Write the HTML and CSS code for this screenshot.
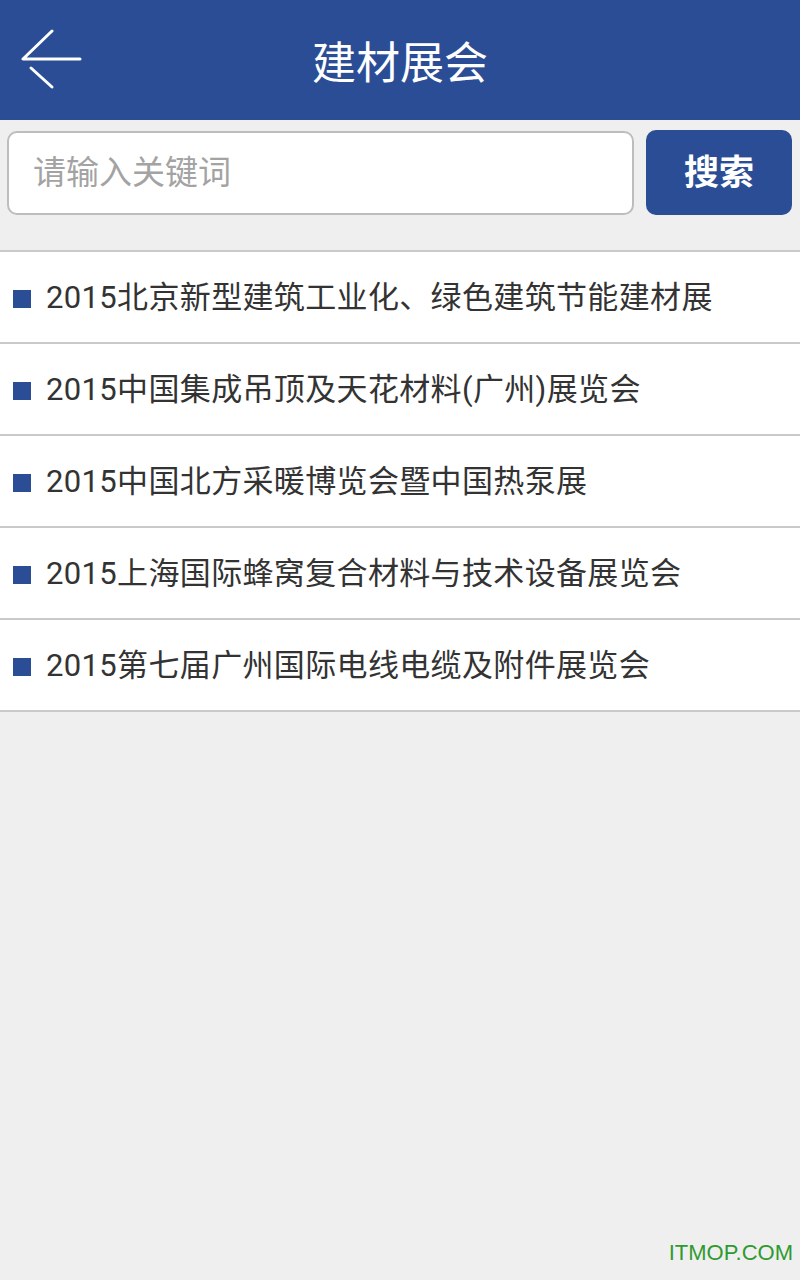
FILE: index.html
```html
<!DOCTYPE html>
<html lang="zh-CN">

<head>
    <meta charset="UTF-8">
    <meta name="viewport" content="width=device-width, initial-scale=1.0">
    <title>建材展会</title>
    <link rel="stylesheet" href="styles.css">
</head>

<body>
    <div class="header">
        <a href="#" class="back">
            <svg width="64" height="64" viewBox="0 0 64 64">
                <path d="M31 2 L2 30 L59 30" fill="none" stroke="#fff" stroke-width="3" stroke-linecap="round" stroke-linejoin="round" />
                <path d="M10 39 L31 58" fill="none" stroke="#fff" stroke-width="3" stroke-linecap="round" />
            </svg>
        </a>
        <div class="title">建材展会</div>
        <div></div>
    </div>

    <div class="search">
        <input type="text" class="search-input" placeholder="请输入关键词">
        <button class="search-btn">搜索</button>
    </div>

    <ul class="list">
        <li class="item"><span class="dot"></span>2015北京新型建筑工业化、绿色建筑节能建材展</li>
        <li class="item"><span class="dot"></span>2015中国集成吊顶及天花材料(广州)展览会</li>
        <li class="item"><span class="dot"></span>2015中国北方采暖博览会暨中国热泵展</li>
        <li class="item"><span class="dot"></span>2015上海国际蜂窝复合材料与技术设备展览会</li>
        <li class="item"><span class="dot"></span>2015第七届广州国际电线电缆及附件展览会</li>
    </ul>

    <div class="watermark">ITMOP.COM</div>
</body>

</html>
```

FILE: styles.css
```css
body {
    margin: 0;
    padding: 0;
    height: 1280px;
    overflow: hidden;
    background-color: #efefef;
    font-family: Roboto, "Noto Sans CJK SC", sans-serif;
    position: relative;
}

.header {
    height: 120px;
    background-color: #2a4d96;
    display: grid;
    grid-template-columns: 1fr auto 1fr;
    align-items: center;
}

.back {
    display: flex;
    padding: 0 0 0 21px;
    margin-top: 2px;
}

.title {
    font-family: "Noto Sans CJK SC", sans-serif;
    font-size: 44px;
    color: #fff;
}

.search {
    display: flex;
    gap: 12px;
    padding: 11px 8px 0 7px;
}

.search-input {
    flex: 1;
    height: 84px;
    box-sizing: border-box;
    border: 2px solid #bdbdbd;
    border-radius: 10px;
    background: #fff;
    padding: 0 0 6px 24px;
    font-family: "Noto Sans CJK SC", sans-serif;
    font-size: 33px;
    outline: none;
}

.search-input::placeholder {
    color: #a3a3a3;
}

.search-btn {
    width: 146px;
    height: 85px;
    border: none;
    border-radius: 10px;
    background-color: #2a4d96;
    color: #fff;
    font-family: "Noto Sans CJK SC", sans-serif;
    font-weight: bold;
    font-size: 35px;
    margin-top: -1px;
    padding: 0 0 6px;
}

.list {
    list-style: none;
    margin: 35px 0 0;
    padding: 0;
    background: #fff;
    border-top: 2px solid #c9c9c9;
}

.item {
    height: 92px;
    box-sizing: border-box;
    display: flex;
    align-items: center;
    border-bottom: 2px solid #c9c9c9;
    font-size: 31px;
    letter-spacing: 0.35px;
    line-height: 1;
    color: #333;
    white-space: nowrap;
}

.dot {
    width: 18px;
    height: 18px;
    background-color: #2a4d96;
    margin: 4px 15px 0 13px;
    flex-shrink: 0;
}

.watermark {
    position: absolute;
    right: 7px;
    bottom: 14px;
    font-family: "Liberation Sans", sans-serif;
    font-size: 22px;
    color: #2f9a2f;
}
```
